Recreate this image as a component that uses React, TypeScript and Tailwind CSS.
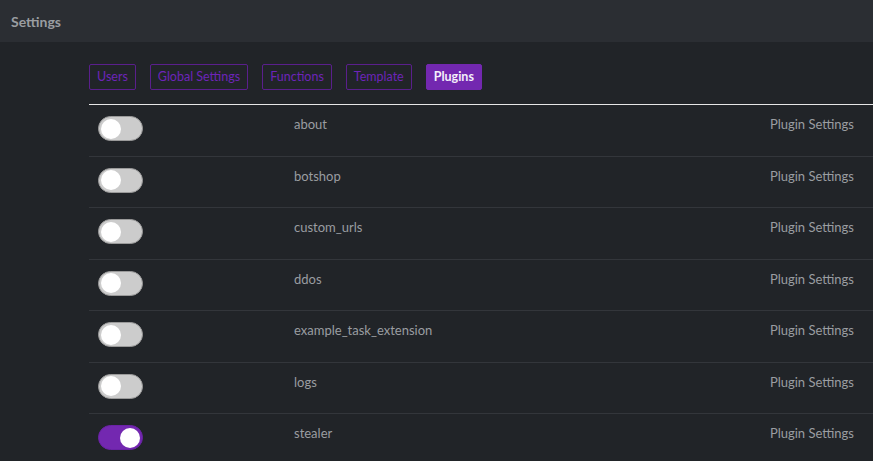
import React from "react";

const plugins = [
  { name: "about", on: false },
  { name: "botshop", on: false },
  { name: "custom_urls", on: false },
  { name: "ddos", on: false },
  { name: "example_task_extension", on: false },
  { name: "logs", on: false },
  { name: "stealer", on: true },
];

const tabs = ["Users", "Global Settings", "Functions", "Template", "Plugins"];

function Toggle({ on }: { on: boolean }) {
  return (
    <div
      className={
        on
          ? "w-[45px] h-[25px] rounded-full bg-[#7328b0] border border-[#6a22a6] flex items-center justify-end px-[2px]"
          : "w-[45px] h-[25px] rounded-full bg-[#cccccc] border border-[#9a9a9a] flex items-center justify-start px-[2px]"
      }
    >
      <div className="w-[20px] h-[20px] rounded-full bg-white" />
    </div>
  );
}

export default function App() {
  return (
    <div
      className="w-[873px] h-[461px] overflow-hidden bg-[#212428] flex flex-col"
      style={{ fontFamily: "Lato, 'Noto Sans', sans-serif" }}
    >
      <div className="h-[42px] shrink-0 bg-[#2b2e33] flex items-center pl-[11px]">
        <span className="text-[14px] font-bold text-[#9a9da1]">Settings</span>
      </div>
      <div className="pl-[89px] pt-[22px]">
        <div className="flex gap-[14px]">
          {tabs.map((t) =>
            t === "Plugins" ? (
              <div
                key={t}
                className="h-[26px] px-[7px] flex items-center rounded-[2px] bg-[#7328b0] text-[#f4effa] text-[12.5px] font-bold border border-[#7328b0]"
              >
                {t}
              </div>
            ) : (
              <div
                key={t}
                className="h-[26px] px-[7px] flex items-center rounded-[2px] border border-[#5a1f8c] text-[#6d24b8] text-[12.5px]"
              >
                {t}
              </div>
            )
          )}
        </div>
        <div className="mt-[14px] border-t border-[#e6e6e6]">
          {plugins.map((p) => (
            <div
              key={p.name}
              className="h-[51.5px] border-b border-[#33363b] flex items-start pt-[11px]"
            >
              <div className="w-[205px] pl-[9px]">
                <Toggle on={p.on} />
              </div>
              <div className="flex-1 text-[13px] text-[#9a9da1] leading-[14px] pt-[1px]">
                {p.name}
              </div>
              <div className="pr-[19px] text-[13px] text-[#9a9da1] leading-[14px] pt-[1px]">
                Plugin Settings
              </div>
            </div>
          ))}
        </div>
      </div>
    </div>
  );
}
